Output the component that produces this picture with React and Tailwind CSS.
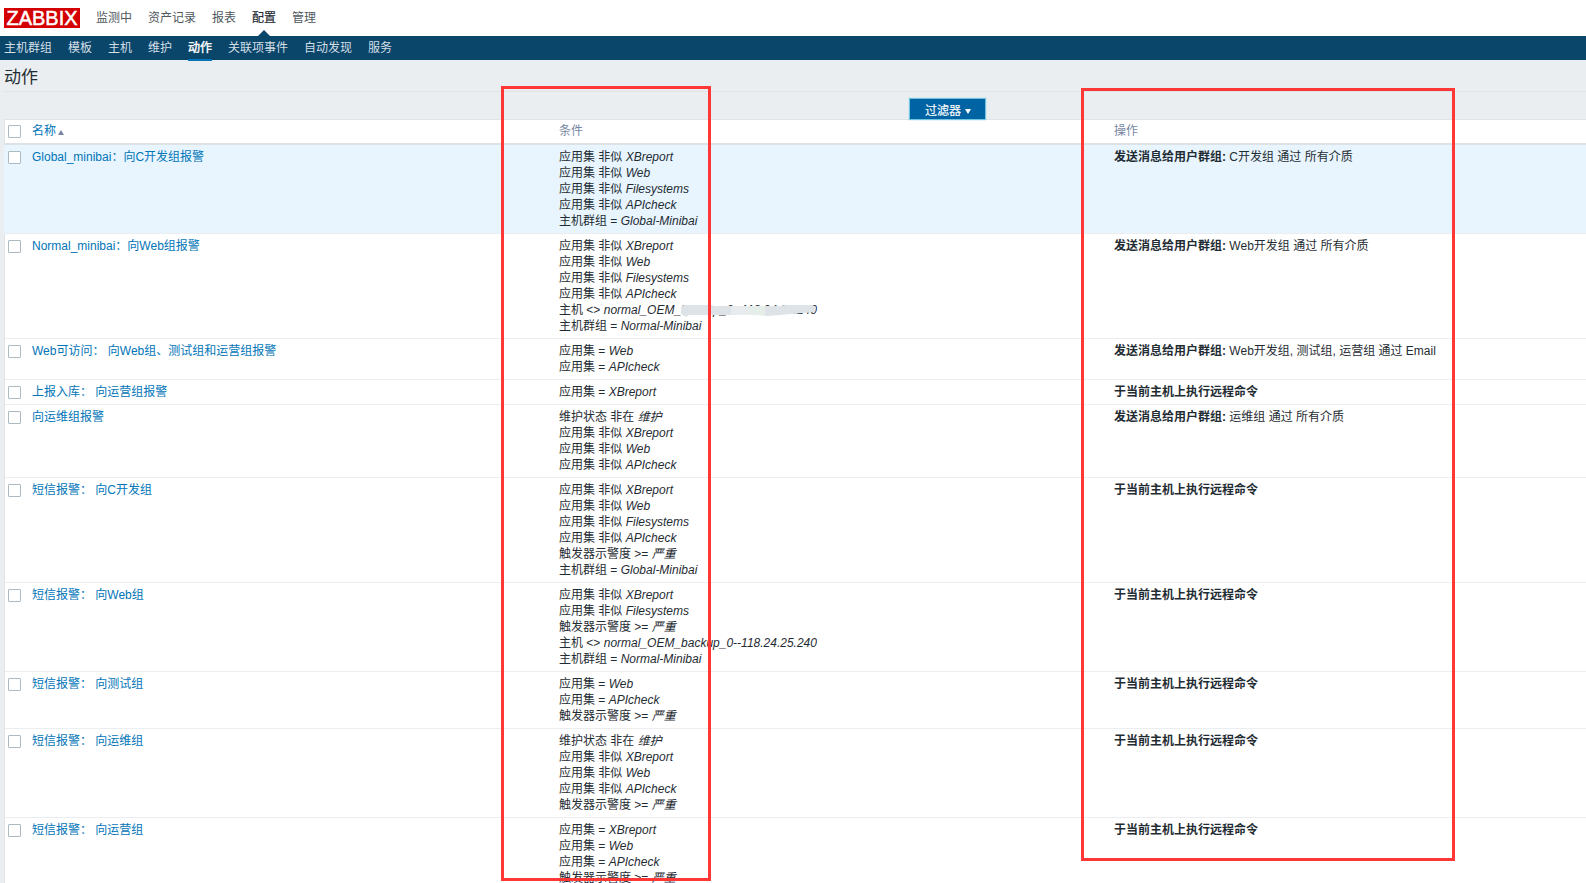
import React from 'react';

const NOT_LIKE = (name) => ['应用集 非似', name];
const EQ = (name) => ['应用集 =', name];
const SEVERE = ['触发器示警度 >=', '严重'];
const OEM = ['主机 <>', 'normal_OEM_backup_0--118.24.25.240'];
const REMOTE = ['于当前主机上执行远程命令', ''];
const SEND = '发送消息给用户群组:';

const rows = [
  {
    name: 'Global_minibai：向C开发组报警',
    conditions: [NOT_LIKE('XBreport'), NOT_LIKE('Web'), NOT_LIKE('Filesystems'), NOT_LIKE('APIcheck'), ['主机群组 =', 'Global-Minibai']],
    action: [SEND, 'C开发组 通过 所有介质'],
    active: true,
  },
  {
    name: 'Normal_minibai：向Web组报警',
    conditions: [NOT_LIKE('XBreport'), NOT_LIKE('Web'), NOT_LIKE('Filesystems'), NOT_LIKE('APIcheck'), [...OEM, true], ['主机群组 =', 'Normal-Minibai']],
    action: [SEND, 'Web开发组 通过 所有介质'],
  },
  {
    name: 'Web可访问： 向Web组、测试组和运营组报警',
    conditions: [EQ('Web'), EQ('APIcheck')],
    action: [SEND, 'Web开发组, 测试组, 运营组 通过 Email'],
  },
  { name: '上报入库： 向运营组报警', conditions: [EQ('XBreport')], action: REMOTE },
  {
    name: '向运维组报警',
    conditions: [['维护状态 非在', '维护'], NOT_LIKE('XBreport'), NOT_LIKE('Web'), NOT_LIKE('APIcheck')],
    action: [SEND, '运维组 通过 所有介质'],
  },
  {
    name: '短信报警： 向C开发组',
    conditions: [NOT_LIKE('XBreport'), NOT_LIKE('Web'), NOT_LIKE('Filesystems'), NOT_LIKE('APIcheck'), SEVERE, ['主机群组 =', 'Global-Minibai']],
    action: REMOTE,
  },
  {
    name: '短信报警： 向Web组',
    conditions: [NOT_LIKE('XBreport'), NOT_LIKE('Filesystems'), SEVERE, OEM, ['主机群组 =', 'Normal-Minibai']],
    action: REMOTE,
  },
  { name: '短信报警： 向测试组', conditions: [EQ('Web'), EQ('APIcheck'), SEVERE], action: REMOTE },
  {
    name: '短信报警： 向运维组',
    conditions: [['维护状态 非在', '维护'], NOT_LIKE('XBreport'), NOT_LIKE('Web'), NOT_LIKE('APIcheck'), SEVERE],
    action: REMOTE,
  },
  {
    name: '短信报警： 向运营组',
    conditions: [EQ('XBreport'), EQ('Web'), EQ('APIcheck'), SEVERE],
    action: REMOTE,
  },
];

const mainMenu = ['监测中', '资产记录', '报表', '配置', '管理'];
const subMenu = ['主机群组', '模板', '主机', '维护', '动作', '关联项事件', '自动发现', '服务'];

function Checkbox() {
  return <span className="block size-[13px] rounded-[1px] border border-[#acbbc2] bg-white" />;
}

function Smudge() {
  return (
    <svg className="absolute left-[122px] top-0 h-4 w-[140px]" viewBox="0 0 140 16">
      <path d="M0 5 L3 3 H30 L34 4 H98 L104 3 H131 L135 5 L134 10 L122 11 L98 13 L88 14 L76 13 H34 L8 13 L5 15 L0 12Z" fill="#dde3e6" />
      <path d="M50 4 H67 V13 H50Z" fill="#e8ecef" />
      <path d="M67 4 H84 V13 H67Z" fill="#e6eee9" />
    </svg>
  );
}

function Header() {
  return (
    <header>
      <div className="flex h-9 items-start bg-white pl-1">
        <div className="mt-2 flex h-5 w-[76px] items-center justify-center bg-[#d40000]">
          <svg width="76" height="20" viewBox="0 0 76 20">
            <text x="2.5" y="17.2" textLength="71" lengthAdjust="spacingAndGlyphs" fill="#fff" stroke="#fff" strokeWidth="0.5" fontSize="20" fontFamily="Liberation Sans, sans-serif">ZABBIX</text>
          </svg>
        </div>
        <nav className="ml-4 flex gap-4 text-[#50585e]">
          {mainMenu.map((m) => (
            <div key={m} className={m === '配置' ? 'relative flex h-9 items-start pt-[10px] text-[#1f2c33] [-webkit-text-stroke:0.2px_#1f2c33]' : 'flex h-9 items-start pt-[10px]'}>
              {m}
              {m === '配置' && (
                <svg className="absolute bottom-0 left-[6px]" width="12" height="6" viewBox="0 0 12 6">
                  <path d="M0 6 L6 0 L12 6Z" fill="#0a466a" />
                </svg>
              )}
            </div>
          ))}
        </nav>
      </div>
      <nav className="flex h-6 gap-4 bg-[#0a466a] pl-1 text-[#d3dfe6]">
        {subMenu.map((m) => (
          <div key={m} className={m === '动作' ? 'h-[25px] border-b-2 border-[#0275b8] pt-1 text-white [-webkit-text-stroke:0.4px_#fff]' : 'h-[25px] pt-1'}>
            {m}
          </div>
        ))}
      </nav>
    </header>
  );
}

export default function App() {
  return (
    <div className="relative h-[883px] w-[1586px] overflow-hidden whitespace-nowrap bg-[#ebeef0] font-['Liberation_Sans','Noto_Sans_CJK_SC',sans-serif] text-[12px] leading-[16px] text-[#1f2c33]">
      <Header />
      <div className="ml-1 flex h-8 items-start border-b border-[#dfe4e7] pt-2">
        <h1 className="text-[17px] leading-5">动作</h1>
      </div>
      <div className="flex h-[27px] items-end pl-[909px]">
        <button className="relative z-10 -mb-px flex h-[22px] w-[77px] items-center gap-1 border border-[#72c5e0] bg-[#0063a4] pl-[15px] pt-[3px] text-white shadow-[0_0_1px_#72c5e0]">
          <span className="[-webkit-text-stroke:0.15px_#fff]">过滤器</span>
          <svg className="mt-px" width="6" height="5" viewBox="0 0 6 5"><path d="M0 0H6L3 5Z" fill="#fff" /></svg>
        </button>
      </div>
      <main className="ml-1 border-l border-t border-[#dfe4e7] bg-white">
        <div className="grid h-[25px] grid-cols-[27px_527px_555px_1fr] border-b-2 border-[#dce2e5] pt-[3px] text-[#7686a3]">
          <div className="pl-[3px] pt-[2px]"><Checkbox /></div>
          <div className="flex items-start text-[#0275b8]">
            名称
            <svg className="ml-[2px] mt-[7px]" width="6" height="5" viewBox="0 0 6 5"><path d="M0 5H6L3 0Z" fill="#7686a3" /></svg>
          </div>
          <div>条件</div>
          <div>操作</div>
        </div>
        {rows.map((r) => (
          <div key={r.name} className={`grid grid-cols-[27px_527px_555px_1fr] border-b border-[#ebeef0] py-1 ${r.active ? '-ml-px bg-[#e8f5ff] pl-px' : ''}`}>
            <div className="pl-[3px] pt-[2px]"><Checkbox /></div>
            <div className="whitespace-pre text-[#0275b8]">{r.name}</div>
            <div>
              {r.conditions.map(([label, value, hidden], i) => (
                <div key={i} className="relative h-4">
                  {label} <em>{value}</em>
                  {hidden && <Smudge />}
                </div>
              ))}
            </div>
            <div><b>{r.action[0]}</b> {r.action[1]}</div>
          </div>
        ))}
      </main>
      <div className="absolute left-[501px] top-[86px] z-20 h-[795px] w-[210px] border-[3px] border-[#ff3737]" />
      <div className="absolute left-[1081px] top-[88px] z-20 h-[773px] w-[374px] border-[3px] border-[#ff3737]" />
    </div>
  );
}
